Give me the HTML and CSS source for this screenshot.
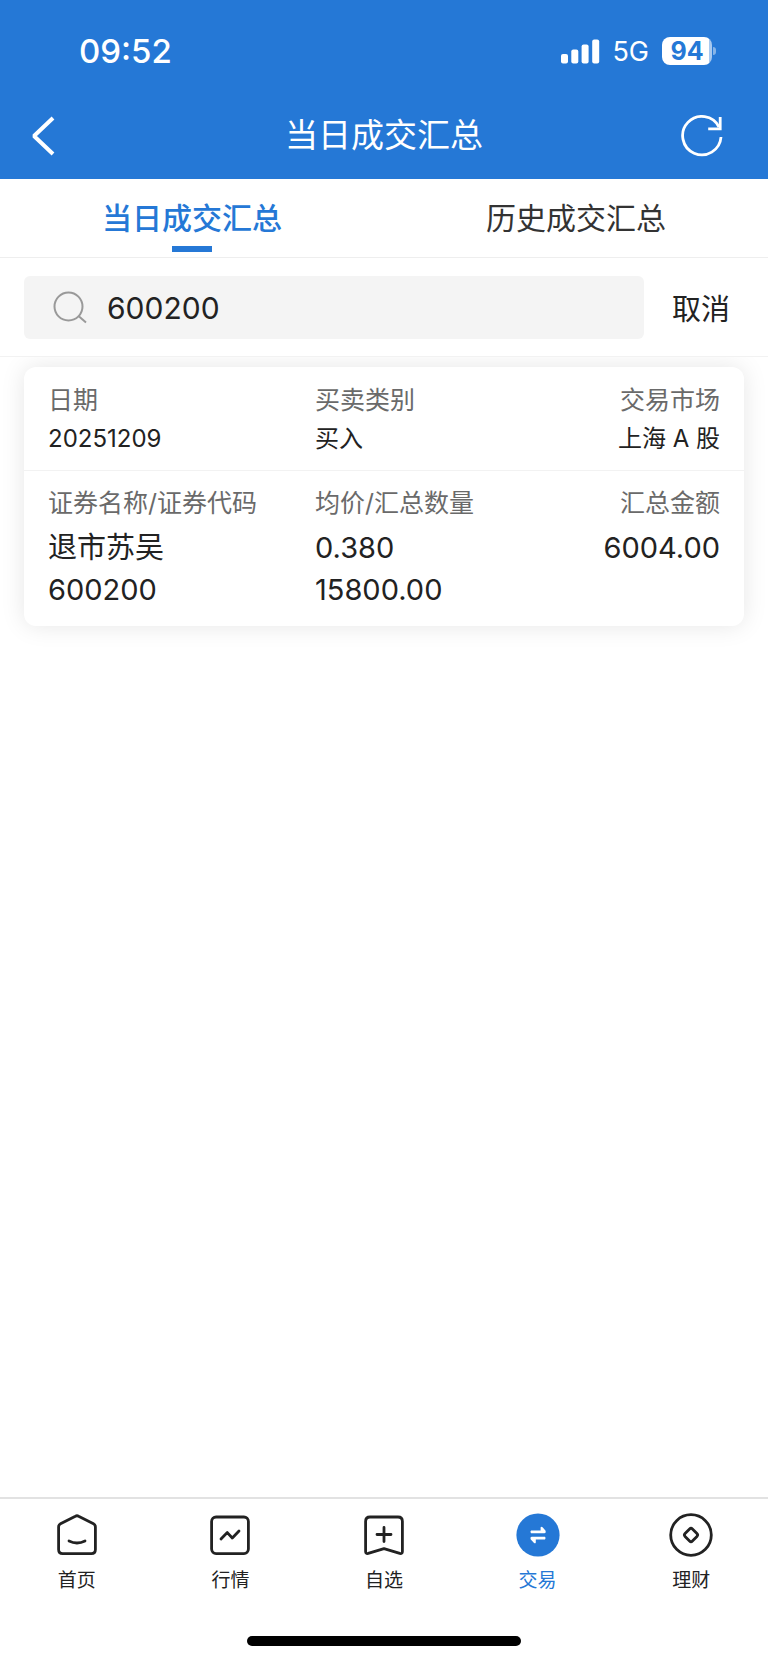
FILE: index.html
```
<!DOCTYPE html>
<html lang="zh-CN">
<head>
  <meta charset="UTF-8">
  <meta name="viewport" content="width=device-width, initial-scale=1.0">
  <title>当日成交汇总</title>
  <link rel="stylesheet" href="styles.css">
</head>
<body>
  <header class="header">
    <div class="status-bar">
      <span class="time">09:52</span>
      <div class="status-icons">
        <svg class="signal" width="39" height="25" viewBox="0 0 39 25" fill="#fff">
          <rect x="0" y="15" width="7" height="9.5" rx="2"/>
          <rect x="10.3" y="10.5" width="7" height="14" rx="2"/>
          <rect x="20.6" y="5.5" width="7" height="19" rx="2"/>
          <rect x="31.2" y="0.5" width="7" height="24" rx="2"/>
        </svg>
        <span class="network">5G</span>
        <span class="battery">94</span>
      </div>
    </div>
    <div class="title-bar">
      <button class="icon-btn back" type="button" aria-label="返回">
        <svg width="24" height="42" viewBox="0 0 24 42" fill="none" stroke="#fff" stroke-width="4">
          <path d="M22 3 L3 21 L22 39" stroke-linejoin="bevel"/>
        </svg>
      </button>
      <h1>当日成交汇总</h1>
      <button class="icon-btn" type="button" aria-label="刷新">
        <svg width="42" height="42" viewBox="0 0 42 42" fill="none" stroke="#fff" stroke-width="2.8">
          <path d="M40 22 A19.2 19.2 0 1 1 38 12"/>
          <path d="M39.2 2 V13.8 H27.2"/>
        </svg>
      </button>
    </div>
  </header>

  <nav class="tabs">
    <a class="tab active" href="#today">当日成交汇总</a>
    <a class="tab" href="#history">历史成交汇总</a>
  </nav>

  <form class="search">
    <label class="search-box">
      <svg width="34" height="34" viewBox="0 0 34 34" fill="none" stroke="#999" stroke-width="2">
        <circle cx="15.5" cy="15.5" r="14"/>
        <path d="M25.5 25 L33 31.5"/>
      </svg>
      <input type="text" name="code" value="600200" aria-label="证券代码">
    </label>
    <button class="cancel" type="button">取消</button>
  </form>

  <main class="results">
    <article class="card">
      <dl class="card-row">
        <div>
          <dt>日期</dt>
          <dd>20251209</dd>
        </div>
        <div>
          <dt>买卖类别</dt>
          <dd>买入</dd>
        </div>
        <div>
          <dt>交易市场</dt>
          <dd>上海 A 股</dd>
        </div>
      </dl>
      <dl class="card-row large">
        <div>
          <dt>证券名称/证券代码</dt>
          <dd>退市苏吴</dd>
          <dd>600200</dd>
        </div>
        <div>
          <dt>均价/汇总数量</dt>
          <dd>0.380</dd>
          <dd>15800.00</dd>
        </div>
        <div>
          <dt>汇总金额</dt>
          <dd>6004.00</dd>
        </div>
      </dl>
    </article>
  </main>

  <footer class="bottom">
    <nav class="bottom-nav">
      <a href="#home">
        <svg width="44" height="44" viewBox="0 0 44 44" fill="none" stroke="#222" stroke-width="2.8" stroke-linecap="round" stroke-linejoin="round">
          <path d="M20.4 3.2 Q22 2.3 23.6 3.2 L38.5 10.8 Q40.4 11.8 40.4 14 V36.5 Q40.4 40.6 36.3 40.6 H7.7 Q3.6 40.6 3.6 36.5 V14 Q3.6 11.8 5.5 10.8 Z"/>
          <path d="M14 28 Q22 32 30 28"/>
        </svg>
        <span>首页</span>
      </a>
      <a href="#quotes">
        <svg width="44" height="44" viewBox="0 0 44 44" fill="none" stroke="#222" stroke-width="2.8" stroke-linecap="round" stroke-linejoin="round">
          <rect x="3.6" y="4" width="36.8" height="36.6" rx="4.5"/>
          <path d="M13 26 L19.3 19.6 L24.3 25 L31 18"/>
        </svg>
        <span>行情</span>
      </a>
      <a href="#watchlist">
        <svg width="44" height="44" viewBox="0 0 44 44" fill="none" stroke="#222" stroke-width="2.8" stroke-linecap="round" stroke-linejoin="round">
          <path d="M8 4 H36 Q40.4 4 40.4 8.4 V38.5 Q40.4 41 37.8 40.4 L22 35.6 L6.2 40.4 Q3.6 41 3.6 38.5 V8.4 Q3.6 4 8 4 Z"/>
          <path d="M15 21.5 H29 M22 14.5 V28.5"/>
        </svg>
        <span>自选</span>
      </a>
      <a class="active" href="#trade">
        <svg width="44" height="44" viewBox="0 0 44 44">
          <circle cx="22" cy="22" r="21.6" fill="#2578d6"/>
          <path d="M15 17.6 H24.6 V14.6 Q25 13 26.6 14.2 L29.6 17.8 Q30.4 20 28.6 20.2 H15 Q13.8 19 15 17.6 Z M29 26.4 H19.8 V29.4 Q19.4 31 17.8 29.8 L14.6 26.2 Q13.8 24 15.6 23.8 H29 Q30.2 25 29 26.4 Z" fill="#fff"/>
        </svg>
        <span>交易</span>
      </a>
      <a href="#wealth">
        <svg width="44" height="44" viewBox="0 0 44 44" fill="none" stroke="#222" stroke-width="2.8">
          <circle cx="22" cy="22" r="20.3"/>
          <rect x="16.8" y="16.8" width="10.4" height="10.4" rx="2" transform="rotate(45 22 22)"/>
        </svg>
        <span>理财</span>
      </a>
    </nav>
    <div class="home-indicator"></div>
  </footer>
</body>
</html>
```
FILE: styles.css
```
* {
    margin: 0;
    padding: 0;
    box-sizing: border-box;
}
body {
    min-height: 100vh;
    display: flex;
    flex-direction: column;
    background: #fff;
    color: #222;
    font-family: Inter, "Noto Sans CJK SC", sans-serif;
}
a {
    color: inherit;
    text-decoration: none;
}
button {
    border: 0;
    background: transparent;
    color: inherit;
    font-family: inherit;
    cursor: pointer;
}
svg {
    display: block;
}

/* header */
.header {
    background: #2578d6;
    color: #fff;
    padding-bottom: 9px;
}
.status-bar {
    height: 102px;
    padding: 0 56px 0 79px;
    display: flex;
    align-items: center;
    justify-content: space-between;
}
.time {
    font-size: 33px;
    font-weight: 500;
}
.status-icons {
    display: flex;
    align-items: center;
}
.network {
    margin: 0 13px 0 12px;
    font-size: 27px;
}
.battery {
    position: relative;
    width: 50px;
    height: 28px;
    border-radius: 8px;
    background: linear-gradient(to right, #fff 47px, #a8c9ef 47px);
    color: #2578d6;
    font-size: 25px;
    font-weight: 700;
    line-height: 28px;
    text-align: center;
}
.battery::after {
    content: "";
    position: absolute;
    top: 10px;
    right: -4px;
    width: 3px;
    height: 8px;
    border-radius: 0 4px 4px 0;
    background: #86b4e8;
}
.title-bar {
    height: 68px;
    padding: 0 45px 0 31px;
    display: flex;
    align-items: center;
}
.title-bar h1 {
    flex: 1;
    font-size: 33px;
    font-weight: 400;
    line-height: 66px;
    padding-bottom: 2px;
    text-align: center;
}
.icon-btn {
    width: 42px;
    height: 42px;
}
.icon-btn.back {
    width: 56px;
}

/* tabs */
.tabs {
    display: flex;
    border-bottom: 1px solid #eee;
}
.tab {
    position: relative;
    flex: 1;
    color: #333;
    font-size: 30px;
    line-height: 78px;
    text-align: center;
}
.tab.active {
    color: #2578d6;
    font-weight: 500;
}
.tab.active::after {
    content: "";
    position: absolute;
    left: 50%;
    bottom: 5px;
    width: 40px;
    height: 6px;
    margin-left: -20px;
    background: #2578d6;
}

/* search */
.search {
    display: flex;
    align-items: center;
    padding: 18px 0 17px 24px;
    border-bottom: 1px solid #f2f2f2;
}
.search-box {
    flex: 1;
    min-width: 0;
    height: 63px;
    padding: 0 29px;
    display: flex;
    align-items: center;
    gap: 20px;
    border-radius: 6px;
    background: #f4f4f4;
}
.search-box input {
    flex: 1;
    min-width: 0;
    border: 0;
    outline: 0;
    background: transparent;
    color: #222;
    font-family: inherit;
    font-size: 30px;
}
.cancel {
    padding: 0 38px 2px 28px;
    font-size: 29px;
}

/* results */
.results {
    flex: 1;
    padding: 10px 24px 40px;
    overflow: hidden;
}
.card {
    border-radius: 12px;
    background: #fff;
    box-shadow: 0 0 24px rgba(0, 0, 0, 0.1);
}
.card-row {
    display: grid;
    grid-template-columns: 267px 1fr auto;
    padding: 14px 24px 11px;
}
.card-row div:last-child {
    text-align: right;
}
.card-row dt {
    color: #6a6a6a;
    font-size: 25px;
    line-height: 38px;
    white-space: nowrap;
}
.card-row dd {
    font-size: 24px;
    line-height: 40px;
}
.card-row.large {
    padding: 13px 24px 15px;
    border-top: 1px solid #f2f2f2;
}
.large dt {
    margin-bottom: 5px;
}
.large dd {
    font-size: 29px;
    line-height: 42px;
}

/* bottom nav */
.bottom {
    border-top: 2px solid #e2e2e2;
}
.bottom-nav {
    display: flex;
    padding-top: 14px;
}
.bottom-nav a {
    flex: 1;
    display: flex;
    flex-direction: column;
    align-items: center;
    gap: 10px;
    font-size: 19px;
    line-height: 28px;
}
.bottom-nav .active {
    color: #2578d6;
}
.home-indicator {
    width: 274px;
    height: 10px;
    margin: 41px auto 17px;
    border-radius: 5px;
    background: #000;
}
```
